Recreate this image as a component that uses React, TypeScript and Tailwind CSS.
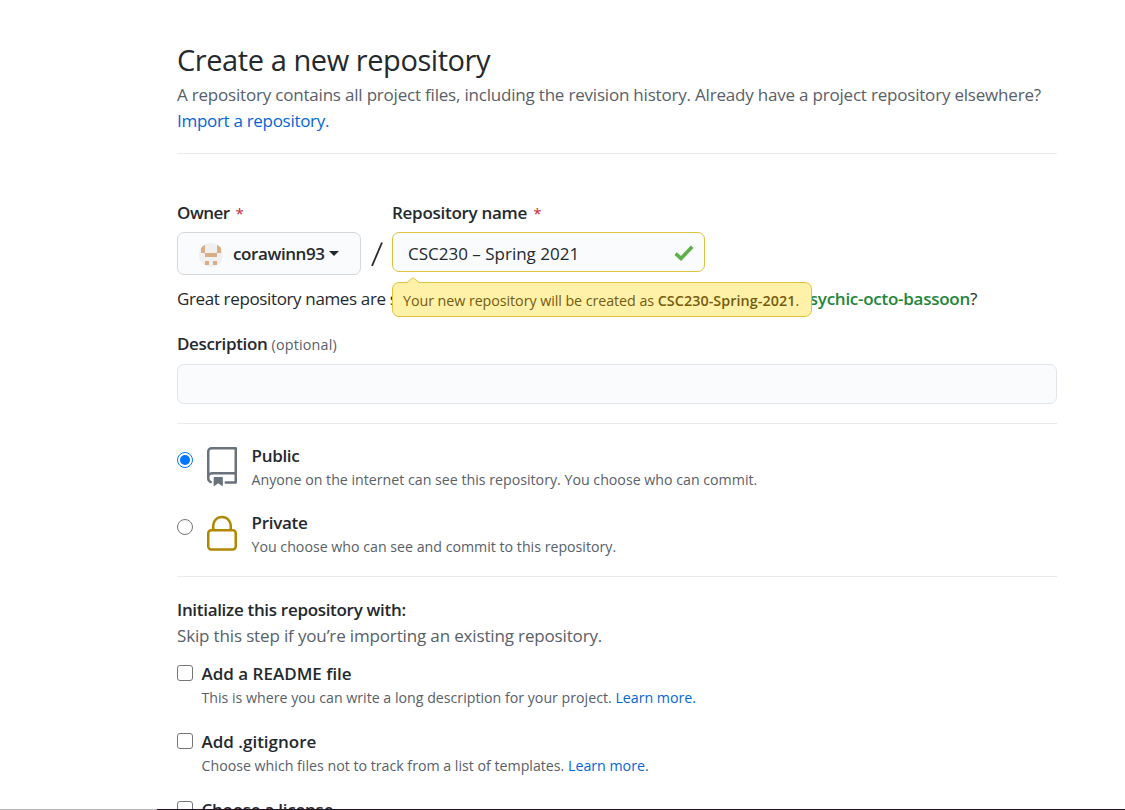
import type { ReactNode } from "react";

function Rule({ className }: { className: string }) {
  return <div className={`h-px bg-[#e9ebee] ${className}`} />;
}

function Avatar() {
  return (
    <svg width="24" height="24" viewBox="0 0 24 24">
      <defs>
        <clipPath id="avatar-circle">
          <circle cx="12" cy="12" r="12" />
        </clipPath>
      </defs>
      <g clipPath="url(#avatar-circle)">
        <rect width="24" height="24" fill="#f0f0f0" />
        <path
          fill="#d9ad86"
          d="M2 2h4v4H2zM18 2h4v4h-4zM2 6h4v4H2zM18 6h4v4h-4zM6 10h12v4H6zM6 18h4v4H6zM14 18h4v4h-4z"
        />
      </g>
    </svg>
  );
}

function RepoIcon() {
  return (
    <svg width="40" height="40" viewBox="0 0 24 24" fill="#6a737d">
      <path
        fillRule="evenodd"
        d="M3 2.75A2.75 2.75 0 0 1 5.75 0h14.5a.75.75 0 0 1 .75.75v20.5a.75.75 0 0 1-.75.75h-6a.75.75 0 0 1 0-1.5h5.25v-4H6A1.5 1.5 0 0 0 4.5 18v.75c0 .716.43 1.334 1.05 1.605a.75.75 0 0 1-.6 1.374A3.251 3.251 0 0 1 3 18.75v-16zM19.5 1.5V15H6c-.546 0-1.059.146-1.5.401V2.75c0-.69.56-1.25 1.25-1.25H19.5z"
      />
      <path d="M7 18.25a.25.25 0 0 1 .25-.25h5a.25.25 0 0 1 .25.25v5.01a.25.25 0 0 1-.397.201l-2.206-1.604a.25.25 0 0 0-.294 0L7.397 23.46a.25.25 0 0 1-.397-.2v-5.01z" />
    </svg>
  );
}

function LockIcon() {
  return (
    <svg width="40" height="40" viewBox="0 0 24 24" fill="#b08800">
      <path
        fillRule="evenodd"
        d="M6 9V7.25C6 3.845 8.503 1 12 1s6 2.845 6 6.25V9h.5a2.5 2.5 0 0 1 2.5 2.5v8a2.5 2.5 0 0 1-2.5 2.5h-13A2.5 2.5 0 0 1 3 19.5v-8A2.5 2.5 0 0 1 5.5 9H6zm1.5-1.75C7.5 4.58 9.422 2.5 12 2.5c2.578 0 4.5 2.08 4.5 4.75V9h-9V7.25zm-3 4.25a1 1 0 0 1 1-1h13a1 1 0 0 1 1 1v8a1 1 0 0 1-1 1h-13a1 1 0 0 1-1-1v-8z"
      />
    </svg>
  );
}

function Radio({ checked = false }: { checked?: boolean }) {
  return (
    <span
      className={`flex size-4 items-center justify-center rounded-full border bg-white ${
        checked ? "border-[#0075ff]" : "border-[#767676]"
      }`}
    >
      {checked && <span className="size-2.5 rounded-full bg-[#0075ff]" />}
    </span>
  );
}

function Visibility({
  icon,
  title,
  note,
  checked,
}: {
  icon: ReactNode;
  title: string;
  note: ReactNode;
  checked?: boolean;
}) {
  return (
    <div className="flex h-12">
      <div className="pt-[9px]">
        <Radio checked={checked} />
      </div>
      <div className="ml-[9px] pt-1">{icon}</div>
      <div className="ml-[9.5px]">
        <div className="h-[26px] text-[17px] leading-[26px] font-[560] tracking-[-0.3px]">{title}</div>
        <div className="text-[14.2px] leading-[22px] whitespace-nowrap text-[#586069]">{note}</div>
      </div>
    </div>
  );
}

function Option({ title, children }: { title: ReactNode; children?: ReactNode }) {
  return (
    <div className="flex h-[68px]">
      <span className="mt-[5px] size-4 shrink-0 rounded-[3px] border border-[#767676] bg-white" />
      <div className="ml-[8.5px]">
        <div className="h-[26px] text-[17px] leading-[27px] font-[560] whitespace-nowrap">{title}</div>
        <div className="text-[14.2px] leading-[23px] whitespace-nowrap text-[#586069]">{children}</div>
      </div>
    </div>
  );
}

export default function App() {
  return (
    <div className="h-[810px] w-[1125px] overflow-hidden bg-white font-['Open_Sans',sans-serif] text-[17px] text-[#24292e]">
      <main className="ml-[177px] h-[809px] w-[880px] overflow-hidden pt-[37px]">
        <h1 className="h-[45px] text-[29px] leading-[45px] tracking-[-0.43px] whitespace-nowrap">
          Create a new repository
        </h1>
        <p className="leading-[26px] tracking-[-0.2px] whitespace-nowrap text-[#586069]">
          A repository contains all project files, including the revision history. Already have a project repository elsewhere?
          <br />
          <a className="tracking-[-0.3px] text-[#0366d6]">Import a repository.</a>
        </p>
        <Rule className="mt-[19px]" />

        <div className="mt-[46px] flex h-[75px]">
          <div className="w-[184px]">
            <div className="h-[26px] leading-[26px] font-[560] tracking-[-0.5px]">
              Owner <span className="ml-0.5 text-[15px] font-normal text-[#cb2431]">*</span>
            </div>
            <div className="mt-1.5 flex h-[43px] items-center rounded-[7px] border border-[#d5d8da] bg-[#fafbfc] pl-[21px] font-[560] tracking-[-0.4px]">
              <span className="pt-0.5">
                <Avatar />
              </span>
              <span className="ml-[10px]">corawinn93</span>
              <span className="ml-1 border-x-5 border-t-5 border-x-transparent border-t-[#24292e]" />
            </div>
          </div>
          <div className="flex w-[31px] justify-center pt-[42px]">
            <svg width="12" height="25" viewBox="0 0 12 25">
              <path d="M11 0.5 1 24" stroke="#24292e" strokeWidth="1.8" />
            </svg>
          </div>
          <div className="relative w-[313px]">
            <div className="h-[26px] leading-[26px] font-[560] tracking-[-0.28px]">
              Repository name <span className="ml-0.5 text-[15px] font-normal text-[#cb2431]">*</span>
            </div>
            <div className="mt-1.5 flex h-10 items-center justify-between rounded-[7px] border border-[#e0c33c] bg-[#fafbfc] pr-2.5 pl-[15px]">
              <span className="pt-1">CSC230 – Spring 2021</span>
              <svg className="mt-0.5" width="20" height="16" viewBox="0 0 20 16">
                <path d="M1.6 8.6 7 13.4 18.2 1.8" fill="none" stroke="#5eb04a" strokeWidth="3.6" />
              </svg>
            </div>
            <div className="absolute top-[82px] left-0 z-10 flex h-[35px] w-[420px] items-center rounded-[7px] border border-[#e0c33c] bg-[#fff1a8] pt-0.5 pl-[10px] text-[14.3px] whitespace-nowrap text-[#735c0f]">
              <svg className="absolute -top-[6px] left-[13px]" width="14" height="7" viewBox="0 0 14 7">
                <path d="M0 6.5 L7 0.7 L14 6.5V7H0z" fill="#fff1a8" />
                <path d="M0.5 5.8 L7 0.7 L13.5 5.8" fill="none" stroke="#e0c33c" />
              </svg>
              <span className="tracking-[-0.07px]">
                Your new repository will be created as{" "}
                <b className="font-[560] tracking-[0.08px]">CSC230-Spring-2021</b>.
              </span>
            </div>
          </div>
        </div>

        <div className="mt-[11px] flex h-[26px] justify-between pr-[80px] leading-[26px] tracking-[-0.27px] whitespace-nowrap">
          <span className="tracking-[-0.36px]">Great repository names are short</span>
          <span>
            <b className="font-[560] text-[#22863a]">psychic-octo-bassoon</b>?
          </span>
        </div>

        <div className="mt-[19px] h-[26px] leading-[26px] font-[560] tracking-[-0.35px]">
          Description <span className="text-[14.3px] font-medium tracking-[0.2px] text-[#586069]">(optional)</span>
        </div>
        <div className="mt-[7px] h-10 rounded-[7px] border border-[#e1e4e8] bg-[#fafbfc]" />
        <Rule className="mt-[19px]" />

        <div className="mt-[19px] flex flex-col gap-[19px]">
          <Visibility
            checked
            icon={<RepoIcon />}
            title="Public"
            note="Anyone on the internet can see this repository. You choose who can commit."
          />
          <Visibility icon={<LockIcon />} title="Private" note="You choose who can see and commit to this repository." />
        </div>
        <Rule className="mt-[18px]" />

        <div className="mt-5 h-[26px] leading-[26px] font-[560] tracking-[-0.31px]">Initialize this repository with:</div>
        <div className="h-[26px] leading-[26px] tracking-[-0.15px] text-[#586069]">
          Skip this step if you’re importing an existing repository.
        </div>

        <div className="mt-[11px]">
          <Option title="Add a README file">
            This is where you can write a long description for your project. <a className="text-[#0366d6]">Learn more.</a>
          </Option>
          <Option title="Add .gitignore">
            Choose which files not to track from a list of templates. <a className="text-[#0366d6]">Learn more.</a>
          </Option>
          <Option title={<span className="tracking-[-0.25px]">Choose a license</span>} />
        </div>
      </main>
      <div className="flex h-px">
        <div className="w-[157px] bg-[#b9b9b9]" />
        <div className="flex-1 bg-[#20121f]" />
      </div>
    </div>
  );
}
